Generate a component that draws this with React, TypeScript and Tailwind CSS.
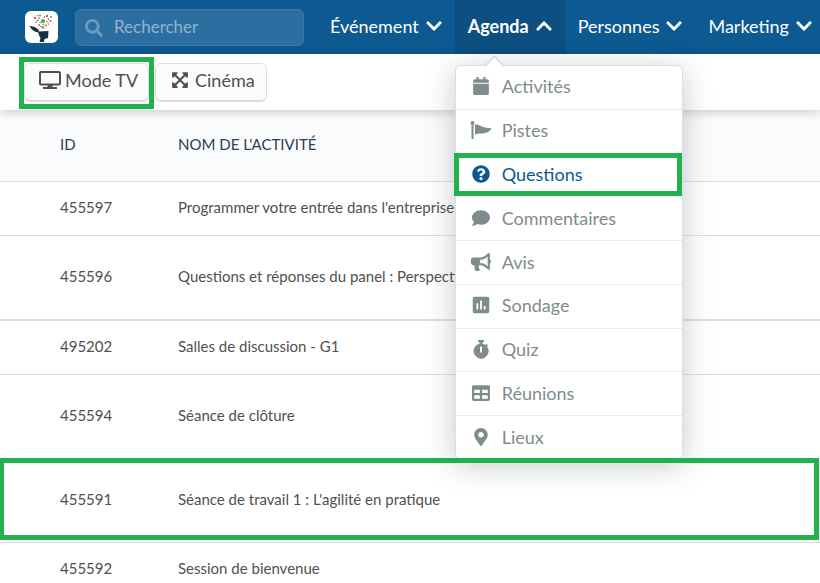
import React from 'react';
import { clsx } from 'clsx';
import {
  FaBullhorn,
  FaCalendar,
  FaChevronDown,
  FaChevronUp,
  FaComment,
  FaExpandArrowsAlt,
  FaMapMarkerAlt,
  FaQuestionCircle,
  FaSearch,
  FaTable,
} from 'react-icons/fa';
import { MdAssessment } from 'react-icons/md';

interface MenuItem {
  label: string;
  icon: React.ReactNode;
  active?: boolean;
}

interface Activity {
  id: string;
  name: string;
  rowClass: string;
  highlighted?: boolean;
}

const Logo: React.FC = () => (
  <svg viewBox="0 0 33 32" className="w-[33px] h-8 shrink-0" role="img" aria-label="Logo">
    <rect width="33" height="32" rx="6" fill="#fff" />
    <path d="M4.5 15 Q9 14.5 13.5 18.5 L14 21.5 Q8 21 4.5 15Z" fill="#14303f" />
    <path d="M13 20.5 L23.5 20 L23 27 L19.5 28 L19 31 L14.5 31 L15.5 27 Q13.5 24 13 20.5Z" fill="#14303f" />
    <g fill="#d9603b">
      <circle cx="10" cy="7" r="1.2" />
      <circle cx="15" cy="4.5" r="1" />
      <circle cx="22" cy="5" r="1.2" />
      <circle cx="25.5" cy="10" r="1.1" />
      <circle cx="14" cy="14" r="1" />
      <circle cx="21" cy="14.5" r="1" />
    </g>
    <g fill="#3f9c8c">
      <circle cx="12.5" cy="9.5" r="1.1" />
      <circle cx="18" cy="10" r="2" />
      <circle cx="26" cy="6" r="1" />
      <circle cx="18" cy="16.5" r="1.2" />
      <circle cx="12.5" cy="4.5" r="0.8" />
    </g>
    <g fill="#e3a344">
      <circle cx="15.5" cy="11.5" r="1.1" />
      <circle cx="22" cy="10.5" r="1.1" />
      <circle cx="18.5" cy="13.5" r="1.1" />
      <circle cx="23.5" cy="13" r="0.9" />
    </g>
    <g fill="#4a5c68">
      <circle cx="14" cy="7" r="0.8" />
      <circle cx="19.5" cy="6" r="0.8" />
      <circle cx="23.5" cy="8" r="0.8" />
      <circle cx="11" cy="11.5" r="0.7" />
      <circle cx="16" cy="15.5" r="0.7" />
    </g>
  </svg>
);

const MonitorIcon: React.FC = () => (
  <svg viewBox="0 0 22 18" className="w-[22px] h-[18px]" fill="none" stroke="currentColor" strokeWidth="2">
    <rect x="1" y="1" width="20" height="12.5" rx="1" />
    <path d="M11 13.5v3" strokeWidth="5" />
    <path d="M4 17h14" />
  </svg>
);

const PennantIcon: React.FC = () => (
  <svg viewBox="0 0 22 18" className="w-[22px] h-[18px]" fill="currentColor">
    <circle cx="2.5" cy="2" r="2" />
    <rect x="1.5" y="2" width="2" height="16" />
    <path d="M5 3.2 C9 3.2 12 6 16 6.8 L21.5 7.3 C19.5 11.5 15 12.5 11 12.5 C8.5 12.5 7 12.7 5 13.5Z" />
  </svg>
);

const StopwatchIcon: React.FC = () => (
  <svg viewBox="0 0 16 19" className="w-4 h-[19px]">
    <path
      fill="currentColor"
      d="M5 0h6v2H9.5v1.8a7.2 7.2 0 0 1 3 1.2l1.1-1.1 1.4 1.4-1 1.2A7.5 7.5 0 1 1 6.5 3.8V2H5Z"
    />
    <rect x="7" y="6.5" width="2" height="6" rx="0.5" fill="#fff" />
  </svg>
);

const menuItems: MenuItem[] = [
  { label: 'Activités', icon: <FaCalendar size={18} /> },
  { label: 'Pistes', icon: <PennantIcon /> },
  { label: 'Questions', icon: <FaQuestionCircle size={18} />, active: true },
  { label: 'Commentaires', icon: <FaComment size={18} /> },
  { label: 'Avis', icon: <FaBullhorn size={20} /> },
  { label: 'Sondage', icon: <MdAssessment size={22} /> },
  { label: 'Quiz', icon: <StopwatchIcon /> },
  { label: 'Réunions', icon: <FaTable size={18} /> },
  { label: 'Lieux', icon: <FaMapMarkerAlt size={18} /> },
];

const activities: Activity[] = [
  { id: '455597', name: "Programmer votre entrée dans l'entreprise", rowClass: 'h-[54px] border-b' },
  { id: '455596', name: 'Questions et réponses du panel : Perspectives', rowClass: 'h-[85px] border-b-2' },
  { id: '495202', name: 'Salles de discussion - G1', rowClass: 'h-[54px] border-b' },
  { id: '455594', name: 'Séance de clôture', rowClass: 'h-[84px] border-b' },
  { id: '455591', name: "Séance de travail 1 : L'agilité en pratique", rowClass: 'h-[84px] border-b', highlighted: true },
  { id: '455592', name: 'Session de bienvenue', rowClass: 'h-[54px] border-b' },
];

const NavButton: React.FC<{ label: string; open?: boolean }> = ({ label, open }) => (
  <button
    type="button"
    aria-expanded={open}
    className={clsx(
      'flex h-full items-center gap-1.5 pl-[13px] pr-3 pb-0.5 text-lg text-white whitespace-nowrap',
      open ? 'bg-[#0c4f80] font-bold' : 'font-normal'
    )}
  >
    {label}
    {open ? <FaChevronUp size={18} /> : <FaChevronDown size={18} />}
  </button>
);

const AgendaMenu: React.FC = () => (
  <div className="absolute left-0 top-full z-10 mt-[11px] w-[228px] rounded-md border border-[#dcdfdf] bg-white shadow-[0_5px_30px_rgba(60,80,80,0.3)]">
    <span className="absolute -top-2 left-[31px] size-[15px] rotate-45 border-l-2 border-t-2 border-[#dcdfdf] bg-white" />
    <ul className="relative flex h-[393px] flex-col">
      {menuItems.map((item) => (
        <li
          key={item.label}
          className="relative flex-1 border-b border-[#ebeded] last:border-b-0"
        >
          <a
            href="#"
            className={clsx(
              'flex h-full items-center gap-2.5 pb-0.5 pl-3.5 text-lg',
              item.active ? 'text-[#0d5991]' : 'text-[#7f8c8d]'
            )}
          >
            <span className="flex w-[22px] justify-center">{item.icon}</span>
            {item.label}
          </a>
          {item.active && (
            <span className="pointer-events-none absolute -left-0.5 right-0 -top-px bottom-0 border-5 border-[#22b14c]" />
          )}
        </li>
      ))}
    </ul>
  </div>
);

const toolButton =
  'flex h-[39px] items-center rounded-md border border-b-2 border-[#dcdddd] bg-[#fcfcfc] pb-1 text-lg text-[#505050] whitespace-nowrap';

const App: React.FC = () => {
  return (
    <div className="h-screen overflow-hidden bg-white font-['Lato',sans-serif] text-[#505050]">
      <header className="flex h-[54px] items-center bg-[#0d5991] pl-[25px]">
        <Logo />
        <div className="relative ml-[17px] w-[229px] shrink-0">
          <FaSearch size={18} className="absolute left-2.5 top-2.5 text-[#6c9bc0]" />
          <input
            type="search"
            aria-label="Rechercher"
            placeholder="Rechercher"
            className="h-[37px] w-full rounded-md border border-[#3b78a7] bg-[#2d6ea1] pb-0.5 pl-[38px] text-[17px] text-white placeholder:text-[#8fb3d0]"
          />
        </div>
        <nav className="ml-[13px] flex h-full">
          <NavButton label="Événement" />
          <div className="relative h-full">
            <NavButton label="Agenda" open />
            <AgendaMenu />
          </div>
          <NavButton label="Personnes" />
          <NavButton label="Marketing" />
        </nav>
      </header>

      <div className="relative flex h-14 items-start gap-px bg-white pl-[19px] pt-[3px] shadow-[0_2px_10px_rgba(0,0,0,0.2)]">
        <div className="h-[52px] w-[135px] border-5 border-[#22b14c] pt-px">
          <button type="button" className={clsx(toolButton, 'w-full gap-1 pl-3.5')}>
            <MonitorIcon />
            Mode TV
          </button>
        </div>
        <button type="button" className={clsx(toolButton, 'mt-1.5 w-28 gap-1.5 pl-[15px]')}>
          <FaExpandArrowsAlt size={18} />
          Cinéma
        </button>
      </div>

      <table className="w-full table-fixed border-collapse text-left text-[15px] leading-5">
        <thead>
          <tr className="h-[71px] border-b border-[#dcdfdf] bg-[#fafbfd] text-[#2c3e50]">
            <th className="w-[178px] pb-0.5 pl-[60px] font-normal">ID</th>
            <th className="pb-0.5 font-normal">NOM DE L'ACTIVITÉ</th>
          </tr>
        </thead>
        <tbody>
          {activities.map((activity) => (
            <tr key={activity.id} className={clsx('relative border-[#dcdfdf]', activity.rowClass)}>
              <td className="pb-0.5 pl-[60px]">
                {activity.id}
                {activity.highlighted && (
                  <span className="pointer-events-none absolute -left-px right-px top-0 bottom-px z-20 border-5 border-[#22b14c]" />
                )}
              </td>
              <td className="pb-0.5">{activity.name}</td>
            </tr>
          ))}
        </tbody>
      </table>
    </div>
  );
};

export default App;
